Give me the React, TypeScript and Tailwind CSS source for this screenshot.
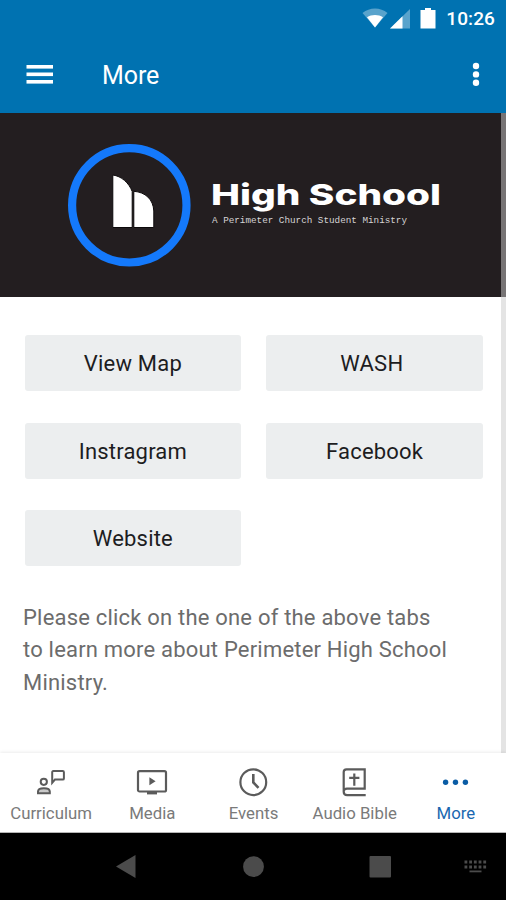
import type { ReactNode } from "react";

const links = ["View Map", "WASH\u00a0", "Instragram", "Facebook", "Website"];

const CurriculumIcon = () => (
  <svg width="30" height="30" viewBox="0 0 30 30" fill="none" stroke="#5b5b5b" strokeWidth="2">
    <circle cx="7.8" cy="14.8" r="3.1" />
    <path d="M2 26.200v-1.6c0-2.200 2.900-3.400 5.900-3.400s5.900 1.200 5.900 3.400v1.6z" fill="#c9c9c9" />
    <path d="M16.200 15.8V5.2c0-.7.4-1.200 1.100-1.200h9.400c.7 0 1.200.5 1.200 1.200v6.2c0 .7-.5 1.200-1.200 1.200h-7.8z" />
  </svg>
);

const MediaIcon = () => (
  <svg width="32" height="30" viewBox="0 0 32 30" fill="none" stroke="#5b5b5b" strokeWidth="2.2">
    <rect x="2" y="4.1" width="28" height="20.4" rx="1.6" />
    <path d="M13.4 10.2l6.2 4-6.2 4z" fill="#5b5b5b" stroke="none" />
    <path d="M11 26.1h10" strokeWidth="2.6" />
  </svg>
);

const EventsIcon = () => (
  <svg width="30" height="30" viewBox="0 0 30 30" fill="none" stroke="#5b5b5b" strokeWidth="2.2">
    <circle cx="15.3" cy="15.2" r="12.9" />
    <path d="M15.3 7v8.4l5.2 5.400" strokeWidth="2.6" />
  </svg>
);

const BibleIcon = () => (
  <svg width="30" height="30" viewBox="0 0 30 30" fill="none" stroke="#5b5b5b" strokeWidth="2.2">
    <path d="M26.700 28.100H8.100c-2 0-3.400-1.500-3.400-3.300V5.100c0-1.500 1.200-2.700 2.800-2.700h18.200v19.200H7.900c-1.900 0-3.200 1.200-3.200 3" />
    <path d="M15.300 6.400v12.400M10.200 10.900h10.200" />
  </svg>
);

const MoreIcon = () => (
  <svg width="30" height="30" viewBox="0 0 30 30" fill="#0a5ca5">
    <circle cx="5.600" cy="15.200" r="2.700" />
    <circle cx="15.500" cy="15.200" r="2.700" />
    <circle cx="25.400" cy="15.200" r="2.700" />
  </svg>
);

const tabs: { name: string; icon: ReactNode; active?: boolean }[] = [
  { name: "Curriculum", icon: <CurriculumIcon /> },
  { name: "Media", icon: <MediaIcon /> },
  { name: "Events", icon: <EventsIcon /> },
  { name: "Audio Bible", icon: <BibleIcon /> },
  { name: "More", icon: <MoreIcon />, active: true },
];

const StatusBar = () => (
  <div className="flex h-[37px] items-center justify-end pr-[11px] text-white">
    <svg width="80" height="24" viewBox="0 0 80 24" fill="#fff">
      <path d="M0.500 6C7.500 0 18.500 0 25.500 6L13 20.500z" opacity=".35" />
      <path d="M5 10.300C9.500 7.200 16.500 7.200 21 10.300L13 20.500z" />
      <path d="M28 21.500L48 2v19.500z" opacity=".35" />
      <path d="M28 21.500L40.500 9.300V21.500z" />
      <path d="M63 1h6v2h4.500v18.500h-15V3H63z" />
    </svg>
    <span className="ml-[4px] text-[19px] leading-6 font-medium tracking-[0.1px]">10:26</span>
  </div>
);

const Header = () => (
  <header className="shrink-0 bg-[#0072b1]">
    <StatusBar />
    <div className="flex h-[76px] items-center pr-[26px] pl-[26px] text-white">
      <svg width="27" height="20" viewBox="0 0 27 20" fill="#fff">
        <rect x=".5" y="0" width="26.500" height="3.600" />
        <rect x=".5" y="7.500" width="26.500" height="3.600" />
        <rect x=".5" y="15" width="26.500" height="3.600" />
      </svg>
      <h1 className="ml-[49px] flex-1 pt-[1px] text-[25px] leading-8 tracking-[-0.100px]">More</h1>
      <svg width="8" height="26" viewBox="0 0 8 26" fill="#fff">
        <circle cx="4" cy="4" r="3.200" />
        <circle cx="4" cy="12.400" r="3.200" />
        <circle cx="4" cy="20.800" r="3.200" />
      </svg>
    </div>
  </header>
);

const Banner = () => (
  <div className="h-[183.500px] w-[501px] bg-[#231e20]">
    <svg width="501" height="184" viewBox="0 0 501 184">
      <circle cx="129.300" cy="92.300" r="57.200" fill="none" stroke="#1479fb" strokeWidth="8.200" />
      <path d="M112.800 62c8.500 1.200 16 7.500 19.400 16.500V114.500h-19.400z" fill="#fff" stroke="#0c090a" strokeWidth="1" />
      <path d="M133.800 78.300c11.500.8 19.500 8 20 19.700v16.500h-20z" fill="#fff" stroke="#0c090a" strokeWidth="1" />
      <text x="211" y="91.500" fill="#fff" fontFamily="Inter, sans-serif" fontSize="29" fontWeight="800" textLength="230" lengthAdjust="spacingAndGlyphs">
        High School
      </text>
      <text x="212" y="110" fill="#d6d4d5" fontFamily="Liberation Mono, monospace" fontSize="8.800" textLength="195" lengthAdjust="spacingAndGlyphs">
        A Perimeter Church Student Ministry
      </text>
    </svg>
  </div>
);

const TabBar = () => (
  <nav className="grid h-[80px] shrink-0 grid-cols-5 border-b border-[#b5b5b5] bg-white shadow-[0_-1px_3px_rgba(0,0,0,0.080)]">
    {tabs.map((tab) => (
      <a key={tab.name} className="flex flex-col items-center pt-[14px]">
        {tab.icon}
        <span
          className={
            tab.active
              ? "mt-[6px] pl-[1px] text-[16.800px] leading-5 whitespace-nowrap text-[#1a68b0]"
              : "mt-[6px] pl-[1px] text-[16.800px] leading-5 whitespace-nowrap text-[#7a7a7a]"
          }
        >
          {tab.name}
        </span>
      </a>
    ))}
  </nav>
);

const SystemNav = () => (
  <div className="h-[67px] shrink-0 bg-black">
    <svg width="506" height="67" viewBox="0 0 506 67" fill="#4b4b4b">
      <path d="M116 33.500L135.500 22v23z" />
      <circle cx="253.500" cy="33.700" r="10.400" />
      <rect x="369.500" y="23" width="21.500" height="21.500" rx="1" />
      {[0, 1, 2, 3, 4].map((i) => (
        <g key={i}>
          <rect x={464.5 + i * 4.7} y="27.500" width="2.800" height="3" />
          <rect x={464.5 + i * 4.7} y="32.500" width="2.800" height="3" />
        </g>
      ))}
      <rect x="469.500" y="37.500" width="12" height="1.800" />
    </svg>
  </div>
);

export default function App() {
  return (
    <div className="flex h-[900px] w-[506px] flex-col overflow-hidden bg-white font-['Roboto',sans-serif]">
      <Header />
      <main className="flex min-h-0 flex-1">
        <div className="w-[501px]">
          <Banner />
          <div className="grid grid-cols-2 gap-x-[25px] gap-y-[31.500px] pt-[38.500px] pr-[18px] pl-[24.500px]">
            {links.map((link) => (
              <button key={link} className="h-[56px] rounded-[3px] bg-[#eceeef] pt-[1px] text-[22px] tracking-[0.200px] text-[#1d1d1f]">
                {link}
              </button>
            ))}
          </div>
          <p className="mt-[36px] ml-[23px] w-[430px] text-[22px] leading-[32.400px] tracking-[0.200px] text-[#6c6c6c]">
            Please click on the one of the above tabs to learn more about Perimeter High School Ministry.
          </p>
        </div>
        <div className="w-[5px] bg-[#e4e4e4]">
          <div className="h-[184px] bg-[#777475]" />
        </div>
      </main>
      <TabBar />
      <SystemNav />
    </div>
  );
}
